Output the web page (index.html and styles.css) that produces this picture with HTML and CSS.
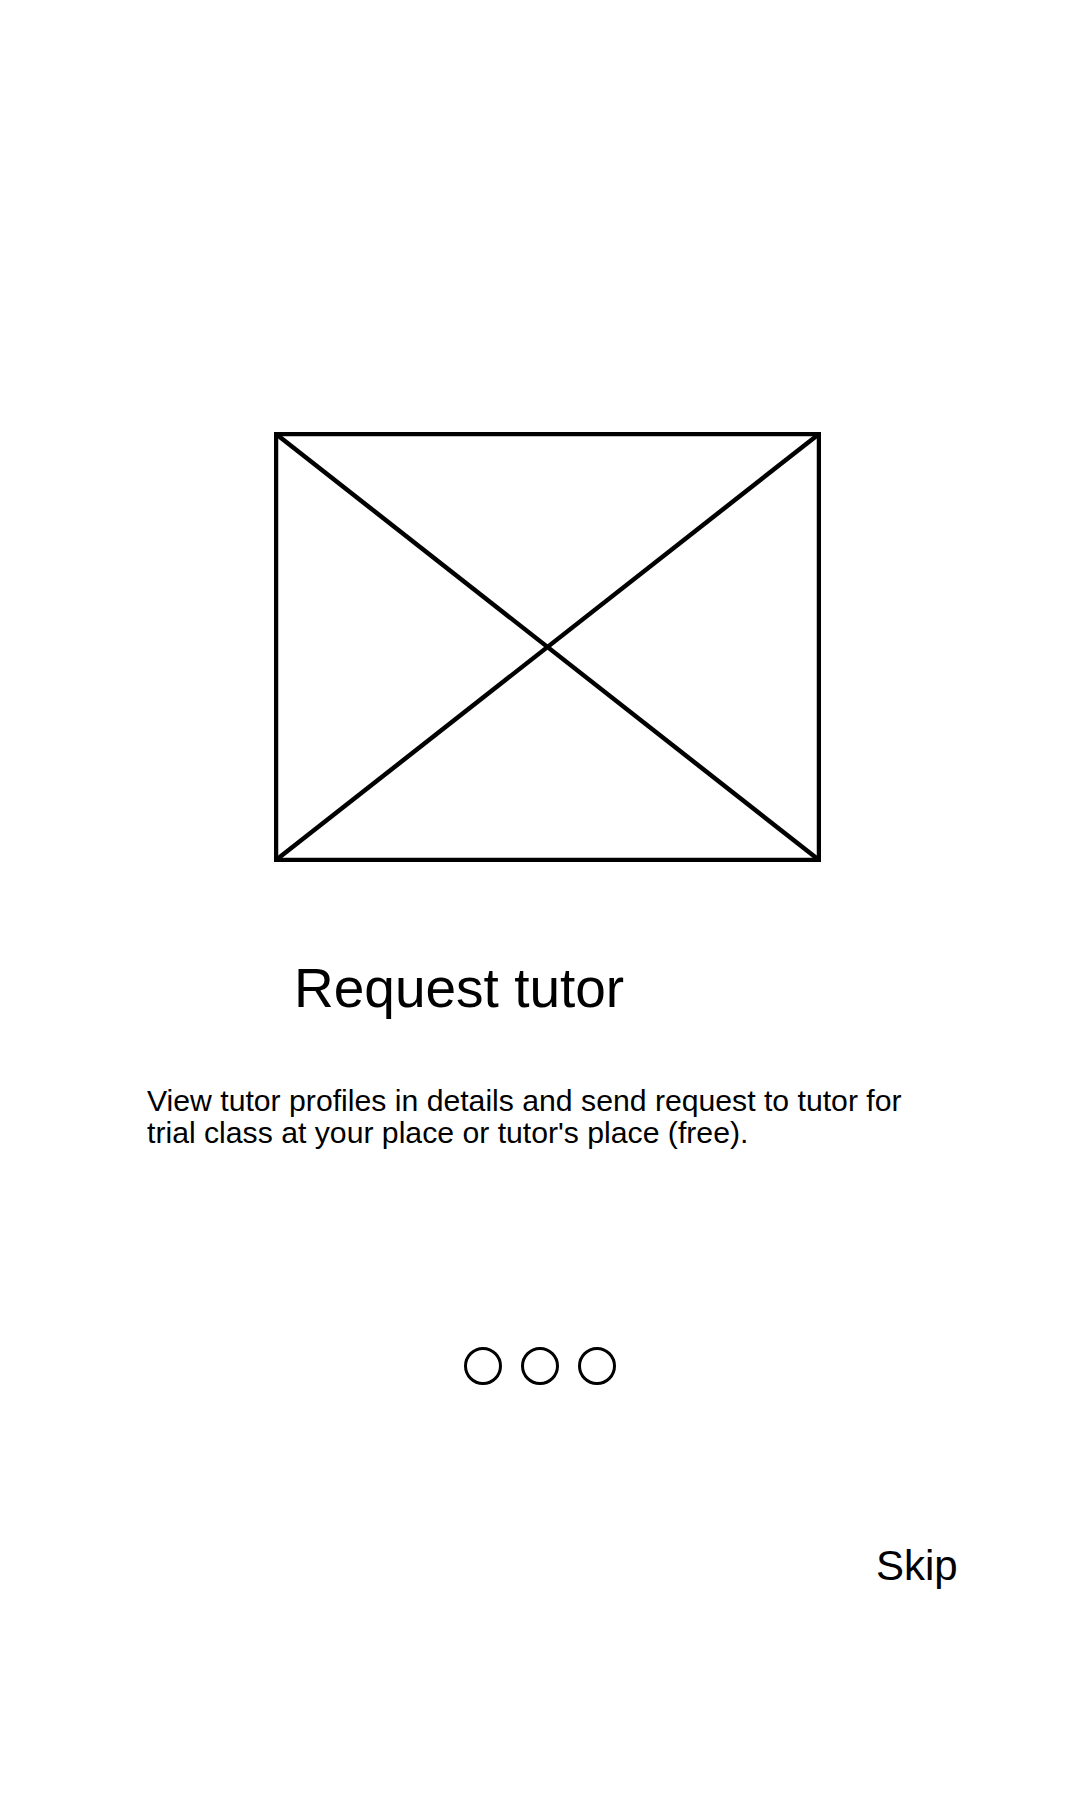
FILE: index.html
```html
<!DOCTYPE html>
<html lang="en">
<head>
<meta charset="utf-8">
<title>Request tutor</title>
<link rel="stylesheet" href="styles.css">
</head>
<body>
<main class="screen">
  <div class="hero">
    <svg class="placeholder" width="547" height="430" viewBox="0 0 547 430" aria-hidden="true">
      <rect x="2" y="2" width="543" height="426" fill="none" stroke="#000" stroke-width="4.5"/>
      <line x1="2" y1="2" x2="545" y2="428" stroke="#000" stroke-width="4.5"/>
      <line x1="545" y1="2" x2="2" y2="428" stroke="#000" stroke-width="4.5"/>
    </svg>
  </div>
  <h1 class="title">Request tutor</h1>
  <p class="desc">View tutor profiles in details and send request to tutor for trial class at your place or tutor's place (free).</p>
  <div class="dots">
    <span class="dot"></span>
    <span class="dot"></span>
    <span class="dot"></span>
  </div>
  <div class="actions">
    <span class="skip">Skip</span>
  </div>
</main>
</body>
</html>
```
FILE: styles.css
```css
html, body {
  margin: 0;
  padding: 0;
  background: #fff;
}
body {
  font-family: "Liberation Sans", Arial, sans-serif;
  color: #000;
}
.screen {
  width: 1080px;
  min-height: 1800px;
  display: flex;
  flex-direction: column;
}
.hero {
  padding-top: 432px;
  padding-left: 274px;
  display: flex;
}
.placeholder {
  display: block;
}
.title {
  margin: 99px 0 0 294px;
  font-size: 55px;
  font-weight: 400;
  line-height: 1;
}
.desc {
  margin: 69px 0 0 147px;
  width: 780px;
  font-size: 30.2px;
  line-height: 32px;
}
.dots {
  margin-top: 198px;
  display: flex;
  justify-content: center;
  gap: 19px;
}
.dot {
  width: 38px;
  height: 38px;
  box-sizing: border-box;
  border: 3px solid #000;
  border-radius: 50%;
}
.actions {
  margin-top: 160px;
  padding-left: 876px;
  display: flex;
}
.skip {
  font-size: 42px;
  line-height: 1;
}
```
